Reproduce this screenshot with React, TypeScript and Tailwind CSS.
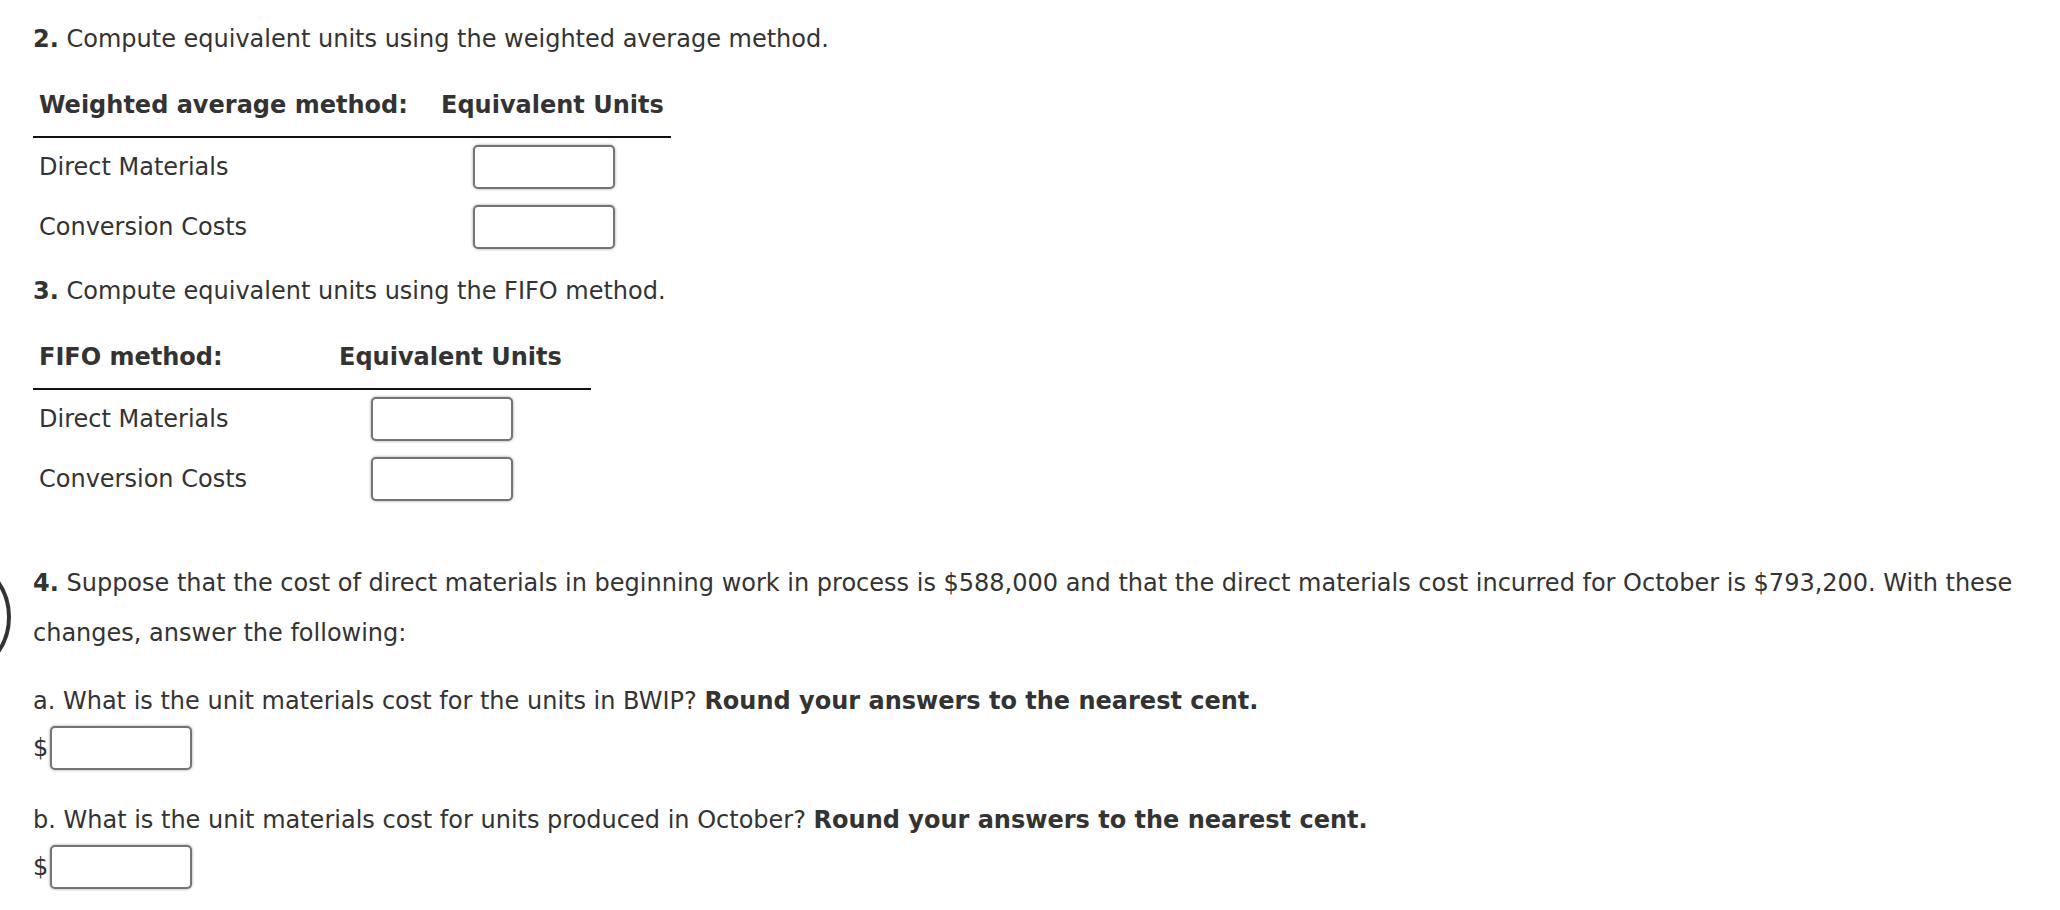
import React from 'react';

type Row = { label: string };

const rows: Row[] = [{ label: 'Direct Materials' }, { label: 'Conversion Costs' }];

const AnswerBox: React.FC<{ className?: string }> = ({ className = '' }) => (
  <input
    type="text"
    aria-label="answer"
    className={`block h-[44px] w-[142px] rounded-[5px] border-2 border-[#747474] bg-white shadow-[0_0_3px_rgba(0,0,0,0.4)] outline-none ${className}`}
  />
);

type UnitsTableProps = {
  title: string;
  labelCol: string;
  valueCol: string;
  tableWidth: string;
};

const UnitsTable: React.FC<UnitsTableProps> = ({ title, labelCol, valueCol, tableWidth }) => (
  <div className={`mt-[16px] ${tableWidth}`}>
    <div className="flex h-[58px] items-start border-b-2 border-[#111] pt-[12px] font-bold leading-[26px]">
      <div className={`${labelCol} pl-[6px]`}>{title}</div>
      <div className={`${valueCol} pl-[6px]`}>Equivalent Units</div>
    </div>
    {rows.map((row) => (
      <div key={row.label} className="flex h-[60px] items-start pt-[7px]">
        <div className={`${labelCol} flex h-[44px] items-center pl-[6px] leading-[26px]`}>
          {row.label}
        </div>
        <div className={`${valueCol} pl-[38px]`}>
          <AnswerBox />
        </div>
      </div>
    ))}
  </div>
);

const App: React.FC = () => {
  return (
    <div
      className="relative min-h-[910px] w-[2060px] overflow-hidden bg-white text-[24px] text-[#333]"
      style={{ fontFamily: '"DejaVu Sans", Verdana, sans-serif' }}
    >
      <svg
        className="absolute left-0 top-[556px]"
        width="14"
        height="124"
        viewBox="0 0 14 124"
        aria-hidden="true"
      >
        <circle cx="-52" cy="61" r="61" fill="none" stroke="#333" strokeWidth="4" />
      </svg>

      <div className="pl-[33px] pr-[20px] pt-[14px]">
        <section>
          <p className="leading-[50px]">
            <span className="font-bold">2.</span> Compute equivalent units using the weighted
            average method.
          </p>
          <UnitsTable
            title="Weighted average method:"
            labelCol="w-[402px]"
            valueCol="w-[236px]"
            tableWidth="w-[638px]"
          />
        </section>

        <section className="mt-[8px]">
          <p className="leading-[50px]">
            <span className="font-bold">3.</span> Compute equivalent units using the FIFO
            method.
          </p>
          <UnitsTable
            title="FIFO method:"
            labelCol="w-[300px]"
            valueCol="w-[258px]"
            tableWidth="w-[558px]"
          />
        </section>

        <section className="mt-[48px]">
          <p className="leading-[50px]">
            <span className="font-bold">4.</span> Suppose that the cost of direct materials in
            beginning work in process is $588,000 and that the direct materials cost incurred for
            October is $793,200. With these changes, answer the following:
          </p>

          <p className="mt-[18px] leading-[50px]">
            a. What is the unit materials cost for the units in BWIP?{' '}
            <span className="font-bold">Round your answers to the nearest cent.</span>
          </p>
          <div className="flex items-center gap-[2px]">
            <span>$</span>
            <AnswerBox />
          </div>

          <p className="mt-[25px] leading-[50px]">
            b. What is the unit materials cost for units produced in October?{' '}
            <span className="font-bold">Round your answers to the nearest cent.</span>
          </p>
          <div className="flex items-center gap-[2px]">
            <span>$</span>
            <AnswerBox />
          </div>
        </section>
      </div>
    </div>
  );
};

export default App;
